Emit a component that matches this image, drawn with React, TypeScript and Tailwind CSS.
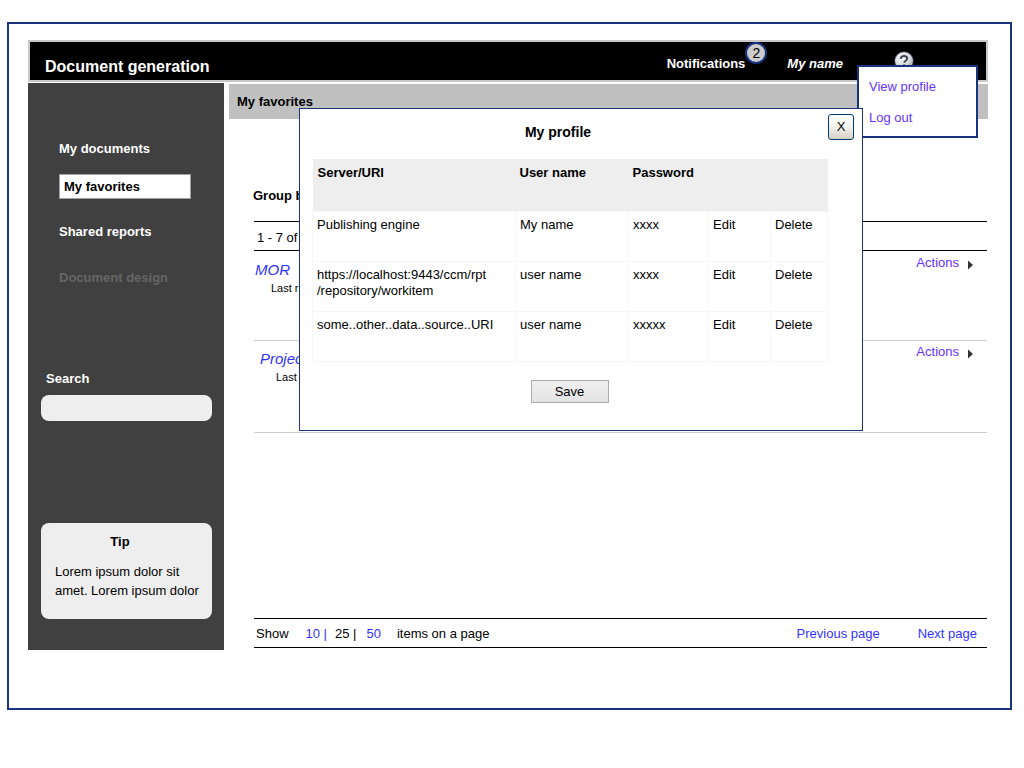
import React from "react";

type Source = { uri: React.ReactNode; user: string; password: string };

const sources: Source[] = [
  { uri: "Publishing engine", user: "My name", password: "xxxx" },
  {
    uri: (
      <>
        https://localhost:9443/ccm/rpt
        <wbr />
        /repository/workitem
      </>
    ),
    user: "user name",
    password: "xxxx",
  },
  { uri: "some..other..data..source..URI", user: "user name", password: "xxxxx" },
];

function HelpIcon() {
  return (
    <svg width="20" height="20" viewBox="0 0 20 20" aria-hidden="true">
      <defs>
        <radialGradient id="help" cx="40%" cy="30%" r="75%">
          <stop offset="0" stopColor="#ffffff" />
          <stop offset="0.6" stopColor="#d9d9dc" />
          <stop offset="1" stopColor="#9a9ca4" />
        </radialGradient>
      </defs>
      <circle cx="10" cy="10" r="9.8" fill="#2a3342" />
      <circle cx="10" cy="10" r="9" fill="url(#help)" />
      <path
        d="M6.8 8C6.8 6 8.2 5 10 5s3.2.9 3.2 2.6c0 2-3 2.2-3 4.2"
        fill="none"
        stroke="#3d4656"
        strokeWidth="2"
      />
      <circle cx="10.1" cy="14.5" r="1.2" fill="#3d4656" />
    </svg>
  );
}

function ActionsButton() {
  return (
    <button type="button" className="flex items-center gap-2 text-[#6633ff]">
      Actions
      <svg width="7" height="10" viewBox="0 0 7 10" className="mt-1" aria-hidden="true">
        <path d="M1 0.5L6 5L1 9.5Z" fill="#333333" />
      </svg>
    </button>
  );
}

function Header() {
  return (
    <header className="flex h-[42px] items-center border-2 border-[#c8c8c8] bg-black text-white">
      <h1 className="mt-[11px] ml-[15px] flex-1 text-[16px] leading-5 font-bold">Document generation</h1>
      <a href="#notifications" className="relative mt-[6px] font-bold">
        Notifications
        <span className="absolute -top-[14px] left-full flex size-[22px] items-center justify-center rounded-full border-2 border-[#1a337f] bg-[#cccccc] text-[14px] font-normal text-black">
          2
        </span>
      </a>
      <a href="#me" className="mt-[6px] ml-[42px] font-bold italic">
        My name
      </a>
      <a href="#help" aria-label="Help" className="mr-[72px] ml-[51px]">
        <HelpIcon />
      </a>
    </header>
  );
}

function Sidebar() {
  return (
    <aside className="flex w-[196px] shrink-0 flex-col bg-[#404040] px-3 pb-[31px] text-white">
      <nav className="mt-[58px] flex flex-col items-start pl-[19px] font-bold">
        <a href="#documents">My documents</a>
        <a
          href="#favorites"
          className="mt-[17px] w-[132px] border border-[#a0a0a8] bg-white px-1 pt-1 pb-[3px] text-black"
        >
          My favorites
        </a>
        <a href="#shared" className="mt-[25px]">Shared reports</a>
        <a href="#design" className="mt-[30px] text-[#666666]">Document design</a>
      </nav>
      <label htmlFor="search" className="mt-[85px] ml-[6px] font-bold">
        Search
      </label>
      <input
        id="search"
        type="search"
        className="mt-2 ml-px h-[26px] w-[171px] rounded-lg bg-[#eeeeee] px-2 text-black outline-none"
      />
      <section className="mt-[102px] ml-px h-[96px] w-[171px] rounded-lg bg-[#eeeeee] pt-[11px] text-black">
        <h2 className="pr-[13px] text-center font-bold">Tip</h2>
        <p className="mt-3 pl-[14px] leading-[19px]">
          Lorem ipsum dolor sit
          <br />
          amet. Lorem ipsum dolor
        </p>
      </section>
    </aside>
  );
}

function Report({ name, nested = false }: { name: string; nested?: boolean }) {
  return (
    <article
      className={
        "flex items-start justify-between border-b border-[#cccccc] pr-[13px] " +
        (nested ? "h-[92px] pt-2 pl-[6px]" : "h-[90px] pt-[9px] pl-px")
      }
    >
      <div>
        <a href="#report" className="text-[15px] leading-5 text-[#3333ff] italic">
          {name}
        </a>
        <p className="pl-4 text-[11px] leading-4">Last run</p>
      </div>
      <div className="-mt-[5px]">
        <ActionsButton />
      </div>
    </article>
  );
}

function Content() {
  return (
    <main className="mt-px ml-[5px] flex flex-1 flex-col">
      <h2 className="bg-[#c0c0c0] px-2 pt-[10px] pb-[9px] font-bold">My favorites</h2>
      <p className="mt-[69px] ml-6 font-bold">Group by</p>
      <div className="mt-[17px] mr-px ml-[25px] flex flex-1 flex-col">
        <p className="border-y border-black pt-2 pb-1 pl-[3px]">1 - 7 of 7</p>
        <Report name="MOR" />
        <Report name="Project report" nested />
        <div className="mt-auto mb-[2px] flex items-center border-y border-black pt-[7px] pb-[5px] pr-[10px] pl-[2px]">
          <span>Show</span>
          <a href="#10" className="ml-[17px] text-[#3333ff]">10 |</a>
          <span className="ml-2">25 |</span>
          <a href="#50" className="ml-[10px] text-[#3333ff]">50</a>
          <span className="ml-4 flex-1">items on a page</span>
          <a href="#previous" className="text-[#3333ff]">Previous page</a>
          <a href="#next" className="ml-[38px] text-[#3333ff]">Next page</a>
        </div>
      </div>
    </main>
  );
}

function ProfileMenu() {
  return (
    <div className="absolute top-[41px] right-[32px] flex h-[73px] w-[121px] flex-col items-start gap-[15px] border-2 border-[#1a337f] bg-white pt-3 pl-[10px] text-[#6633ff]">
      <a href="#profile">View profile</a>
      <a href="#logout">Log out</a>
    </div>
  );
}

function ProfileDialog() {
  const cell = "h-[50px] border border-[#f7f7f7] px-1 pt-[5px] align-top";
  return (
    <div
      role="dialog"
      aria-labelledby="profile-title"
      className="absolute top-[84px] left-[290px] flex w-[564px] flex-col border border-[#1a337f] bg-white px-3 pb-[27px]"
    >
      <div className="flex h-[50px] items-start">
        <h2 id="profile-title" className="mt-[13px] flex-1 pr-6 text-center text-[14px] leading-5 font-bold">
          My profile
        </h2>
        <button
          type="button"
          aria-label="Close"
          className="mt-[5px] -mr-1 size-[26px] rounded-[3px] border border-[#003c74] bg-linear-to-b from-white via-[#f3f3ee] to-[#d6d0c5]"
        >
          X
        </button>
      </div>
      <table className="w-[516px] table-fixed border-collapse text-left">
        <colgroup>
          <col className="w-[203px]" />
          <col className="w-[113px]" />
          <col className="w-[80px]" />
          <col className="w-[62px]" />
          <col />
        </colgroup>
        <thead>
          <tr className="h-[52px] bg-[#eeeeee] align-top">
            <th className="px-[5px] pt-[6px]">Server/URI</th>
            <th className="px-1 pt-[6px]">User name</th>
            <th className="px-1 pt-[6px]" colSpan={3}>Password</th>
          </tr>
        </thead>
        <tbody>
          {sources.map((s, i) => (
            <tr key={i}>
              <td className={cell}>{s.uri}</td>
              <td className={cell}>{s.user}</td>
              <td className={cell}>{s.password}</td>
              <td className={cell}>
                <button type="button">Edit</button>
              </td>
              <td className={cell}>
                <button type="button">Delete</button>
              </td>
            </tr>
          ))}
        </tbody>
      </table>
      <button
        type="button"
        className="mt-[18px] mr-[23px] h-[23px] w-[78px] self-center border border-[#adadad] bg-linear-to-b from-[#efefef] to-[#e3e3e3] pt-px"
      >
        Save
      </button>
    </div>
  );
}

export default function App() {
  return (
    <div className="bg-white pt-[22px] pr-3 pb-6 pl-[7px] font-['Liberation_Sans',Arial,sans-serif] text-[13px] leading-4 text-black">
      <div className="relative border-2 border-[#1a337f] pt-4 pr-[22px] pb-[58px] pl-[19px]">
        <Header />
        <div className="mt-px flex">
          <Sidebar />
          <Content />
        </div>
        <ProfileMenu />
        <ProfileDialog />
      </div>
    </div>
  );
}
